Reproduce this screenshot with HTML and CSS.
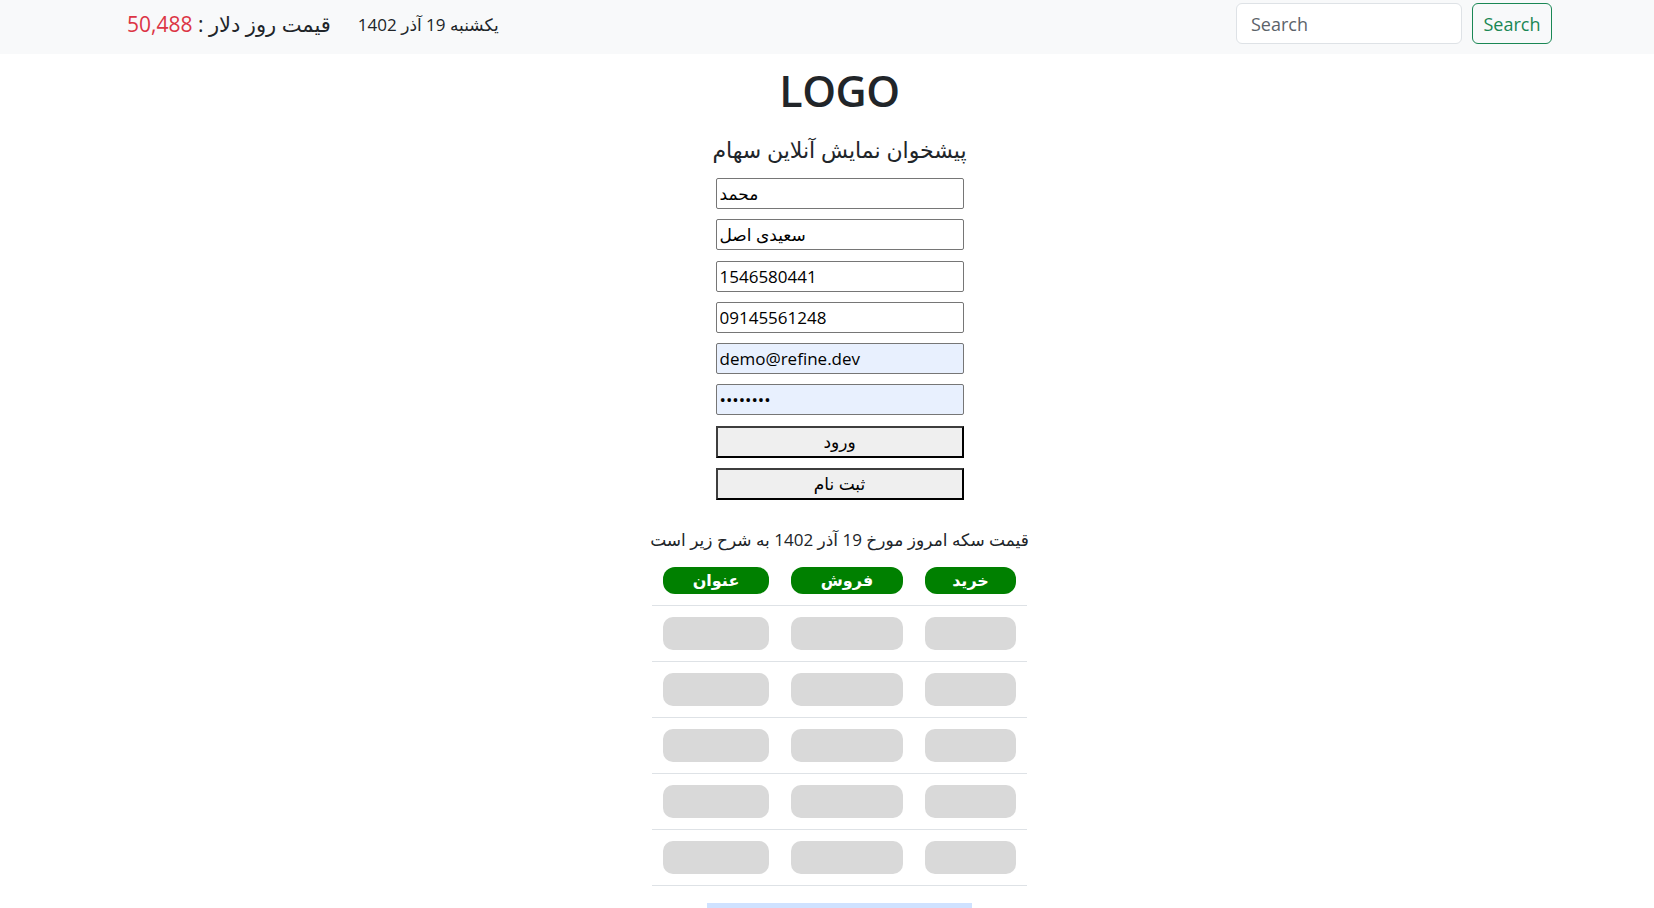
FILE: index.html
```html
<!DOCTYPE html>
<html lang="fa">
<head>
<meta charset="utf-8">
<title>پیشخوان نمایش آنلاین سهام</title>
<link rel="stylesheet" href="styles.css">
</head>
<body>
<nav class="navbar">
  <div class="nav-inner">
    <div class="nav-info">
      <span class="price" dir="rtl">قیمت روز دلار : <span class="red">50,488</span></span>
      <span class="date" dir="rtl">یکشنبه 19 آذر 1402</span>
    </div>
    <form class="search">
      <input class="search-input" type="text" placeholder="Search">
      <button class="search-btn" type="button">Search</button>
    </form>
  </div>
</nav>
<main class="page">
  <h1 class="logo">LOGO</h1>
  <h2 class="title" dir="rtl">پیشخوان نمایش آنلاین سهام</h2>
  <form class="login">
    <input class="field" type="text" value="محمد">
    <input class="field" type="text" value="سعیدی اصل">
    <input class="field" type="text" value="1546580441">
    <input class="field" type="text" value="09145561248">
    <input class="field filled" type="text" value="demo@refine.dev">
    <input class="field filled" type="password" value="12345678">
    <button class="btn" type="button">ورود</button>
    <button class="btn" type="button">ثبت نام</button>
  </form>
  <p class="coin-text" dir="rtl">قیمت سکه امروز مورخ 19 آذر 1402 به شرح زیر است</p>
  <table class="coin-table" dir="rtl">
    <thead>
      <tr>
        <th class="c1"><span class="pill head">خرید</span></th>
        <th class="c2"><span class="pill head">فروش</span></th>
        <th class="c3"><span class="pill head">عنوان</span></th>
      </tr>
    </thead>
    <tbody>
      <tr><td class="c1"><span class="pill skel"></span></td><td class="c2"><span class="pill skel"></span></td><td class="c3"><span class="pill skel"></span></td></tr>
      <tr><td class="c1"><span class="pill skel"></span></td><td class="c2"><span class="pill skel"></span></td><td class="c3"><span class="pill skel"></span></td></tr>
      <tr><td class="c1"><span class="pill skel"></span></td><td class="c2"><span class="pill skel"></span></td><td class="c3"><span class="pill skel"></span></td></tr>
      <tr><td class="c1"><span class="pill skel"></span></td><td class="c2"><span class="pill skel"></span></td><td class="c3"><span class="pill skel"></span></td></tr>
      <tr><td class="c1"><span class="pill skel"></span></td><td class="c2"><span class="pill skel"></span></td><td class="c3"><span class="pill skel"></span></td></tr>
    </tbody>
  </table>
  <div class="bottom-bar"></div>
</main>
</body>
</html>
```
FILE: styles.css
```css
html, body {
  margin: 0;
  padding: 0;
  background: #fff;
  color: #212529;
  font-family: "Open Sans", "DejaVu Sans", sans-serif;
  overflow: hidden;
}

.navbar {
  background: #f8f9fa;
  height: 54px;
}

.nav-inner {
  width: 1425px;
  margin-left: 127px;
  height: 54px;
  display: flex;
  align-items: center;
  justify-content: space-between;
}

.nav-info {
  display: flex;
  align-items: center;
  gap: 27px;
  padding-bottom: 6px;
}

.price {
  font-size: 21px;
  color: #212529;
}

.red {
  color: #dc3545;
}

.date {
  font-size: 17px;
  color: #212529;
}

.search {
  display: flex;
  gap: 10px;
  margin: 0;
  align-self: flex-start;
  padding-top: 3px;
}

.search-input {
  box-sizing: border-box;
  width: 226px;
  height: 41px;
  border: 1px solid #dee2e6;
  border-radius: 6px;
  padding: 0 14px;
  font-family: "Open Sans", sans-serif;
  font-size: 18px;
  background: #fff;
  color: #212529;
  outline: none;
}

.search-input::placeholder {
  color: #5c636a;
}

.search-btn {
  box-sizing: border-box;
  width: 80px;
  height: 41px;
  border: 1px solid #198754;
  border-radius: 6px;
  background: transparent;
  color: #198754;
  font-family: "Open Sans", sans-serif;
  font-size: 18px;
  padding: 0;
}

.page {
  width: 1425px;
  margin-left: 127px;
  display: flex;
  flex-direction: column;
  align-items: center;
}

.logo {
  margin: 10px 0 0;
  font-size: 43px;
  line-height: 53px;
  font-weight: 600;
  letter-spacing: -0.5px;
  color: #212529;
}

.title {
  margin: 14px 0 11px;
  font-size: 22px;
  line-height: 36px;
  font-weight: 400;
  color: #212529;
}

.login {
  display: flex;
  flex-direction: column;
  gap: 10.3px;
  margin: 0;
}

.field {
  box-sizing: border-box;
  width: 248px;
  height: 31px;
  border: 1px solid #767676;
  border-radius: 2px;
  padding: 0 3px;
  font-family: "Open Sans", "DejaVu Sans", sans-serif;
  font-size: 17px;
  color: #000;
  background: #fff;
  outline: none;
}

.field.filled {
  background: #e8f0fe;
}

.btn {
  box-sizing: border-box;
  width: 248px;
  height: 32px;
  border: 2px solid;
  border-color: #3d3d3d #000 #000 #3d3d3d;
  background: #efefef;
  color: #000;
  font-family: "Open Sans", "DejaVu Sans", sans-serif;
  font-size: 17px;
  padding: 0;
  line-height: 28px;
}

.coin-text {
  margin: 28px 0 4px;
  font-size: 17px;
  line-height: 24px;
  color: #212529;
}

.coin-table {
  width: 375px;
  border-collapse: collapse;
}

.coin-table th,
.coin-table td {
  padding: 11px;
  border-bottom: 1px solid #dee2e6;
  vertical-align: middle;
}

.c1 { width: 91px; }
.c2 { width: 112px; }
.c3 { width: 106px; }

.pill {
  display: block;
  width: 100%;
}

.pill.head {
  height: 27px;
  line-height: 26px;
  border-radius: 12px;
  background: #008000;
  color: #fff;
  font-size: 16px;
  font-weight: 700;
  text-align: center;
}

.pill.skel {
  height: 33px;
  border-radius: 10px;
  background: #d9d9d9;
}

.bottom-bar {
  width: 265px;
  height: 36px;
  margin-top: 17px;
  background: #cfe2ff;
}
```
